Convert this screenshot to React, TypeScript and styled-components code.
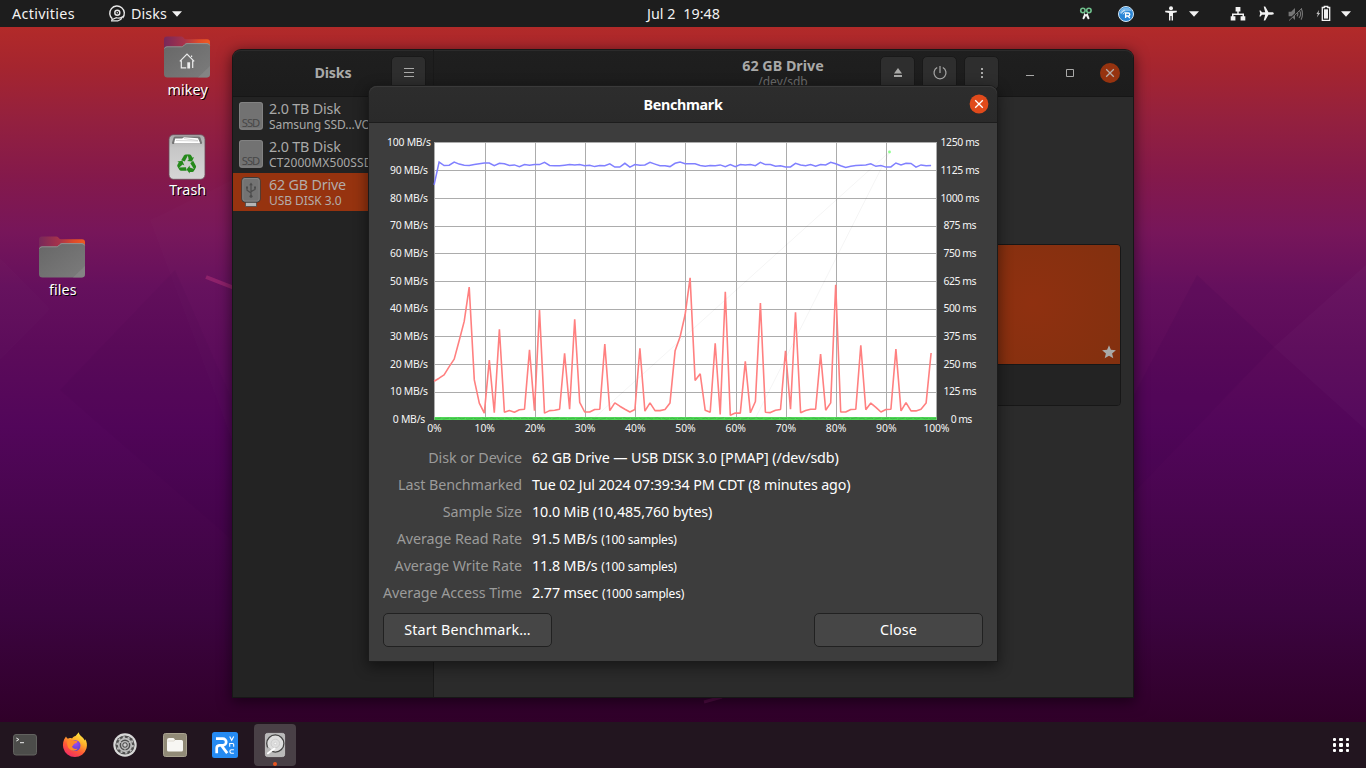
import React from "react";
import styled, { createGlobalStyle, css } from "styled-components";

/* ---------- global ---------- */

const GlobalStyle = createGlobalStyle`
  * { box-sizing: border-box; }
  body {
    margin: 0;
    overflow: hidden;
    font-family: "Noto Sans", "Open Sans", sans-serif;
    font-size: 14.3px;
    line-height: 18px;
  }
  svg { display: block; flex: none; overflow: visible; }
`;

const Screen = styled.div`
  display: flex;
  flex-direction: column;
  width: 1366px;
  height: 768px;
  overflow: hidden;
`;

/* ---------- top bar ---------- */

const TopBar = styled.header`
  display: grid;
  grid-template-columns: 1fr auto 1fr;
  align-items: center;
  height: 27px;
  padding: 0 11px 0 12px;
  background: #1d1d1d;
  color: #f2f2f2;
`;

const TopLeft = styled.div`
  display: flex;
  align-items: center;
`;

const Activities = styled.span`
  width: 97px;
  letter-spacing: 0.34px;
`;

const AppMenu = styled.div`
  display: flex;
  align-items: center;
  gap: 5px;
  letter-spacing: 0.11px;
`;

const Clock = styled.span`
  white-space: pre;
  letter-spacing: 0.06px;
`;

const Tray = styled.div`
  display: flex;
  align-items: center;
  justify-content: flex-end;
`;

const TrayItem = styled.span<{ $w: number; $before?: number }>`
  display: flex;
  justify-content: center;
  width: ${(p) => p.$w}px;
  margin-left: ${(p) => p.$before ?? 0}px;
`;

/* ---------- desktop ---------- */

const Desktop = styled.main`
  position: relative;
  flex: 1;
  overflow: hidden;
  background: linear-gradient(
    180deg,
    #b22a29 0px,
    #a5252f 40px,
    #93203f 95px,
    #84194b 150px,
    #77165a 205px,
    #65105d 260px,
    #5c0b5a 320px,
    #52065a 400px,
    #47054d 490px,
    #3b043f 590px,
    #300029 695px
  );
`;

const Facets = styled.svg`
  position: absolute;
  inset: 0;
`;

const DesktopItem = styled.div<{ $x: number; $y: number }>`
  position: absolute;
  left: ${(p) => p.$x}px;
  top: ${(p) => p.$y}px;
  display: flex;
  flex-direction: column;
  align-items: center;
  width: 80px;
  color: #fff;
  text-shadow: 1px 1px 0 #000;
`;

const ItemLabel = styled.span<{ $gap: number }>`
  margin-top: ${(p) => p.$gap}px;
  padding-left: 1.5px;
  letter-spacing: 0.1px;
`;

/* ---------- disks window ---------- */

const DisksWindow = styled.section`
  position: absolute;
  left: 233px;
  top: 23px;
  display: flex;
  width: 900px;
  height: 647px;
  border-radius: 8px 8px 0 0;
  box-shadow: 0 0 0 1px #171717, 0 3px 14px 2px rgba(0, 0, 0, 0.5);
  color: #a9a9a8;
`;

const headerLook = css`
  display: flex;
  height: 47px;
  background: linear-gradient(#1f1f1f, #1c1c1c);
  border-bottom: 1px solid #161616;
  box-shadow: inset 0 1px #2b2b2b;
`;

const Sidebar = styled.aside`
  display: flex;
  flex-direction: column;
  width: 201px;
  background: #232323;
  border-right: 1px solid #191919;
  border-radius: 8px 0 0 0;
`;

const SideHeader = styled.div`
  ${headerLook}
  align-items: center;
  border-radius: 8px 0 0 0;
  padding-right: 7px;
`;

const SideTitle = styled.h2`
  flex: 1;
  margin: 0;
  padding-left: 42px;
  font-size: 14.3px;
  font-weight: 700;
  text-align: center;
  letter-spacing: -0.19px;
`;

const HeaderButton = styled.button`
  display: flex;
  align-items: center;
  justify-content: center;
  width: 35px;
  height: 34px;
  padding: 0;
  border: 1px solid #191919;
  border-radius: 5px;
  background: #2e2e2e;
  color: #a9a9a8;
`;

const DriveRow = styled.div<{ $active?: boolean }>`
  display: flex;
  align-items: center;
  gap: 6px;
  height: 38px;
  padding-left: 6px;
  background: ${(p) => (p.$active ? "#96330f" : "transparent")};
  color: ${(p) => (p.$active ? "#b3aca9" : "#a9a9a8")};
`;

const DriveText = styled.div`
  display: flex;
  flex-direction: column;
  white-space: nowrap;
`;

const DriveName = styled.span`
  line-height: 16px;
  letter-spacing: -0.17px;
`;

const DriveModel = styled.span<{ $track: number }>`
  font-size: 12px;
  line-height: 15px;
  letter-spacing: ${(p) => p.$track}px;
`;

const MainPane = styled.div`
  display: flex;
  flex-direction: column;
  flex: 1;
  background: #2b2b2b;
  border-radius: 0 8px 0 0;
`;

const MainHeader = styled.div`
  ${headerLook}
  position: relative;
  align-items: center;
  justify-content: flex-end;
  gap: 7px;
  border-radius: 0 8px 0 0;
`;

const MainTitle = styled.div`
  position: absolute;
  inset: 7px 1px 0 0;
  display: flex;
  flex-direction: column;
  align-items: center;
  font-weight: 700;
`;

const MainSubtitle = styled.span`
  font-size: 12px;
  font-weight: 400;
  line-height: 13px;
  color: #6d6d6d;
`;

const WindowControls = styled.div`
  display: grid;
  grid-template-columns: 40px 34px 20px;
  align-items: center;
  margin: 0 13px 0 20px;
`;

const VolumeArea = styled.div`
  display: flex;
  flex-direction: column;
  height: 162px;
  margin: 147px 12px 0;
  border: 1px solid #171717;
  border-radius: 4px;
  overflow: hidden;
`;

const Volume = styled.div`
  display: flex;
  align-items: flex-end;
  justify-content: flex-end;
  height: 120px;
  padding: 0 4px 5px;
  border-bottom: 1px solid #171717;
  background: radial-gradient(circle at 585px 58px, #8f3010 0, #83300f 100px, #7c2e14 160px);
`;

const VolumeToolbar = styled.div`
  flex: 1;
  background: #232323;
`;

/* ---------- benchmark dialog ---------- */

const Dialog = styled.section`
  position: absolute;
  left: 369px;
  top: 59px;
  display: flex;
  flex-direction: column;
  width: 628px;
  height: 575px;
  border-radius: 8px 8px 0 0;
  background: #3d3d3d;
  box-shadow: 0 0 0 1px #1b1b1b, 0 4px 14px 2px rgba(0, 0, 0, 0.45);
  color: #fff;
`;

const DialogHeader = styled.div`
  display: grid;
  grid-template-columns: 28px 1fr 28px;
  align-items: center;
  height: 37px;
  border-bottom: 1px solid #1d1d1d;
  border-radius: 8px 8px 0 0;
  background: linear-gradient(#2d2d2d, #2a2a2a);
  box-shadow: inset 0 1px #3a3a3a;
`;

const DialogTitle = styled.h1`
  grid-column: 2;
  margin: 0;
  padding-top: 2px;
  font-size: 14.3px;
  font-weight: 700;
  line-height: 18px;
  text-align: center;
  letter-spacing: -0.31px;
`;

const Facts = styled.dl`
  display: grid;
  grid-template-columns: 139px auto;
  grid-auto-rows: 27px;
  column-gap: 10px;
  align-items: center;
  margin: 0 14px;
`;

const FactName = styled.dt`
  white-space: nowrap;
  text-align: right;
  color: #9b9b9a;
  letter-spacing: -0.06px;
`;

const FactValue = styled.dd<{ $track?: number }>`
  margin: 0;
  letter-spacing: ${(p) => p.$track ?? -0.1}px;
`;

const Samples = styled.small`
  font-size: 12px;
  line-height: 1;
  letter-spacing: -0.16px;
`;

const DialogActions = styled.div`
  display: flex;
  justify-content: space-between;
  margin: 7px 14px 0;
`;

const ActionButton = styled.button<{ $track: number }>`
  width: 169px;
  height: 34px;
  padding: 0 0 1px;
  border: 1px solid #212121;
  border-radius: 5px;
  background: #464646;
  color: #fff;
  font: inherit;
  letter-spacing: ${(p) => p.$track}px;
`;

/* ---------- dock ---------- */

const Dock = styled.footer`
  display: flex;
  align-items: center;
  height: 46px;
  padding-right: 11px;
  background: #22151f;
`;

const DockSlot = styled.div`
  display: flex;
  justify-content: center;
  width: 50px;
`;

const DockTile = styled.div<{ $active?: boolean }>`
  position: relative;
  display: flex;
  align-items: center;
  justify-content: center;
  width: 42px;
  height: 42px;
  border-radius: 4px;
  background: ${(p) => (p.$active ? "#494046" : "transparent")};
`;

const RunningDot = styled.span`
  position: absolute;
  left: 19px;
  bottom: 0;
  width: 4px;
  height: 4px;
  border-radius: 2px;
  background: #e95420;
`;

const AppsButton = styled.div`
  display: grid;
  grid-template-columns: repeat(3, 4px);
  gap: 2.4px;
  margin-left: auto;
  margin-right: 5px;
  width: 17px;
`;

const AppsDot = styled.i`
  width: 3.4px;
  height: 3.4px;
  border-radius: 1px;
  background: #fff;
`;

/* ---------- icons ---------- */

const Caret = () => (
  <svg width="10" height="6" viewBox="0 0 10 6">
    <path d="M0 .3h10L5 5.700z" fill="#f2f2f2" />
  </svg>
);

const DisksSymbol = () => (
  <svg width="17" height="17" viewBox="0 0 17 17" fill="none" stroke="#e8e8e8" strokeWidth="1.4">
    <path d="M3.400 13.900A7.300 7.300 0 1 1 13.600 13" />
    <circle cx="8.300" cy="7.800" r="2.500" />
    <circle cx="8.300" cy="7.800" r=".7" fill="#e8e8e8" stroke="none" />
    <path d="M2.800 14.800l4.600-2.100c2.200.8 3.800.6 5.600-.7l-1 2.300-3.200 1.600H2.600z" strokeWidth="1.100" />
  </svg>
);

const ScissorsIcon = () => (
  <svg width="14" height="14" viewBox="0 0 14 14" fill="none">
    <circle cx="3.900" cy="3.500" r="2.200" stroke="#6fbf8c" strokeWidth="1.600" />
    <circle cx="9.900" cy="3.500" r="2.200" stroke="#6fbf8c" strokeWidth="1.600" />
    <path d="M5.200 6l1.700 1.400L8.600 6l.6 2 1.400 3.600-1.600 1-2-3.900-2.100 3.900-1.500-1L4.800 8z" fill="#f3f3f3" />
  </svg>
);

const VncTrayIcon = () => (
  <svg width="16" height="16" viewBox="0 0 16 16" fill="none">
    <circle cx="8" cy="8" r="7.500" fill="#2b86d6" stroke="#d5e7f5" />
    <path d="M2 6a6.400 6.400 0 0 1 12-.5C10 4.500 6 5 2 8z" fill="#7ab9ec" />
    <path d="M7.600 12V7h2.700a1.500 1.500 0 0 1 0 3H7.800m2.200 0l1.900 2" stroke="#fff" strokeWidth="1.300" />
    <path d="M3.600 7.500c.4-1.700 1.500-2.800 3.200-3.300M5.200 8.300c.3-1 .8-1.500 1.700-1.900" stroke="#fff" strokeWidth=".8" />
  </svg>
);

const PersonIcon = () => (
  <svg width="12" height="15" viewBox="0 0 12 15" fill="#f2f2f2">
    <circle cx="6" cy="2.300" r="2" />
    <path d="M.2 4.800h11.600v1.400L8 6.900v7.600H6.600V10H5.400v4.500H4V6.900L.2 6.200z" />
  </svg>
);

const NetworkIcon = () => (
  <svg width="16" height="14" viewBox="0 0 16 14" fill="#f2f2f2">
    <path d="M5.600 0h4.800v4.600H8.700v2H14v2.700h1.300v4.200h-4.700V9.300h1.900V8H3.500v1.300h1.900v4.200H.7V9.300H2V6.600h5.300v-2H5.600z" />
  </svg>
);

const PlaneIcon = () => (
  <svg width="15" height="15" viewBox="0 0 15 15" fill="#f2f2f2">
    <path d="M14.800 7.500c0-.8-.8-1.200-2-1.200H9.500L6.200.4H4.700l1.500 5.900H3L1.600 4.500H.4l.8 3-.8 3h1.200L3 8.700h3.200L4.700 14.600h1.500l3.300-5.900h3.300c1.200 0 2-.4 2-1.200z" />
  </svg>
);

const MutedIcon = () => (
  <svg width="15" height="14" viewBox="0 0 15 14" fill="none" stroke="#757575">
    <path d="M.6 4.800h2.600L7 1v12L3.200 9.200H.6z" fill="#757575" stroke="none" />
    <path d="M9 4.700c1 1.300 1 3.300 0 4.600M11 3c1.900 2.300 1.900 5.700 0 8M13 1.400c2 3 2 8.200 0 11.200" strokeWidth="1.100" />
    <path d="M.7 13L13.600.6" stroke="#1d1d1d" strokeWidth="1.300" />
    <path d="M1 13.600L14 1.200" />
  </svg>
);

const BatteryIcon = () => (
  <svg width="15" height="15" viewBox="0 0 15 15" fill="none">
    <path d="M3 4L.4 8h1.500L.8 11.500 4.200 7H2.600z" fill="#bdbdbd" />
    <path d="M8.300 1.500v-1h3.400v1h2v12.800H6.300V1.500z" stroke="#f2f2f2" strokeWidth="1.300" />
    <path d="M8 3.300h4v9.300H8z" fill="#f2f2f2" />
  </svg>
);

const FolderIcon = ({ home }: { home?: boolean }) => (
  <svg width="46" height="42" viewBox="0 0 46 42">
    <defs>
      <linearGradient id="folderBack" x1="0" x2="1">
        <stop offset="0" stopColor="#77285a" />
        <stop offset=".45" stopColor="#a8334a" />
        <stop offset=".75" stopColor="#dd4a2a" />
        <stop offset="1" stopColor="#ee5a22" />
      </linearGradient>
      <linearGradient id="folderFront" x1="0" y1="0" x2="1" y2="1">
        <stop offset="0" stopColor="#676767" />
        <stop offset="1" stopColor="#7c7c7c" />
      </linearGradient>
    </defs>
    <path d="M0 12V3.500Q0 .5 3 .5h14.500q1.500 0 2.300 1.500.8 1.300 2.200 1.300H43q3 0 3 3V15H0z" fill="url(#folderBack)" />
    <path d="M0 13.500q0-3 3-3h14.500q1.200 0 2-.9l1.300-1.300q.9-1 2.200-1h20q3 0 3 3V38q0 3.600-3.500 3.600h-39Q0 41.600 0 38z" fill="url(#folderFront)" />
    <path d="M.5 12.600q.5-1.800 2.500-1.800h14.500q1.200 0 2-.9l1.300-1.300q.9-1 2.200-1h20q2 0 2.600 1.800" fill="none" stroke="#9a9a9a" strokeWidth=".8" />
    <path d="M46 30v8q0 3.600-3.500 3.600H34z" fill="#8a8a8a" opacity=".6" />
    {home && (
      <path
        d="M15.800 25.300L23 18l7.200 7.300M17.300 24.500v7.400h4.900M28.700 24.500v7.400M27.600 21v-1.600"
        fill="none"
        stroke="#ececec"
        strokeWidth="1.200"
      />
    )}
    {home && <path d="M23.300 26.300h2.800v6.200h-2.800z" fill="#ececec" />}
  </svg>
);

const TrashIcon = () => (
  <svg width="38" height="46" viewBox="0 0 38 46">
    <defs>
      <linearGradient id="bin" x1="0" y1="0" x2="0" y2="1">
        <stop offset="0" stopColor="#aaa" />
        <stop offset=".3" stopColor="#c6c6c6" />
        <stop offset="1" stopColor="#d6d6d6" />
      </linearGradient>
    </defs>
    <rect x="1" y=".7" width="36" height="44.600" rx="4.500" fill="url(#bin)" stroke="#6b4a58" strokeWidth=".8" />
    <path d="M4 8.500L5.500 3.800q.5-1.300 2-1.300h23q1.500 0 2 1.300L34 8.500q.3 1.500-1 1.500H5q-1.300 0-1-1.500z" fill="#747474" />
    <path d="M6 9.600l1.200-5.100h7L16 3.300l14 1 2.300 5.300z" fill="#fff" />
    <path d="M8 6.500l22 .5M16 4.500l14 2" stroke="#bbb" strokeWidth=".6" />
    <g transform="translate(19 30)" fill="#25891b">
      {[0, 120, 240].map((a) => (
        <g key={a} transform={`rotate(${a})`}>
          <path d="M-5.800-3.700L-3-8.500q.7-1 1.900-1h2.500l-3.700 7z" />
          <path d="M.7-9.500h2q1 0 1.500.9L5.500-6.300l1.500-.8-2 4.700-5-.7 1.700-1z" />
        </g>
      ))}
    </g>
  </svg>
);

const SsdIcon = () => (
  <svg width="24" height="28" viewBox="0 0 24 28">
    <rect width="24" height="28" rx="3" fill="#727272" />
    <rect x=".5" y=".5" width="23" height="26.500" rx="2.500" fill="none" stroke="#878787" strokeWidth=".8" />
    <text x="12" y="25" textAnchor="middle" textLength="18.500" fontSize="11.200" fill="#474747" fontFamily="Noto Sans">
      SSD
    </text>
  </svg>
);

const UsbIcon = () => (
  <svg width="24" height="30" viewBox="0 0 24 30">
    <path d="M6.500 25h11v4.500h-11z" fill="#b5b5b5" stroke="#4a4a4a" strokeWidth=".8" />
    <rect x="2.800" y=".5" width="18.400" height="24.600" rx="3" fill="#737373" stroke="#3c3a38" />
    <rect x="3.800" y="1.500" width="16.400" height="22.600" rx="2.200" fill="none" stroke="#8c8c8c" strokeWidth=".8" />
    <g stroke="#4c4c4c" strokeWidth="1.200" fill="none">
      <path d="M12 7.500v11M8 10.500v2.700L12 16M16 10.500v2L12 14.600" />
    </g>
    <path d="M12 5.500l1.800 2.800h-3.600zM7 9.500h2v2H7zM15 9.500h2v2h-2z" fill="#4c4c4c" />
    <circle cx="12" cy="19.300" r="1.500" fill="#4c4c4c" />
  </svg>
);

const MenuLines = () => (
  <svg width="10" height="10" viewBox="0 0 10 10" fill="currentColor">
    <path d="M0 0h10v1H0zM0 4h10v1H0zM0 8h10v1H0z" />
  </svg>
);

const EjectIcon = () => (
  <svg width="8" height="10" viewBox="0 0 8 10" fill="currentColor">
    <path d="M4 0l4 5.600H0zM0 7h8v2H0z" />
  </svg>
);

const PowerIcon = () => (
  <svg width="14" height="15" viewBox="0 0 14 15" fill="none" stroke="currentColor" strokeWidth="1.200">
    <path d="M4.200 1.500a6 6 0 1 0 5.600 0M7 0v7" />
  </svg>
);

const KebabIcon = () => (
  <svg width="2" height="10" viewBox="0 0 2 10" fill="currentColor">
    <path d="M0 0h2v2H0zM0 4h2v2H0zM0 8h2v2H0z" />
  </svg>
);

const MinimizeIcon = () => (
  <svg width="8" height="8" viewBox="0 0 8 8">
    <path d="M0 6h8v1H0z" fill="#a9a9a8" />
  </svg>
);

const MaximizeIcon = () => (
  <svg width="8" height="8" viewBox="0 0 8 8" fill="none" stroke="#a9a9a8">
    <path d="M.5.5h7v7h-7z" />
  </svg>
);

const CloseIcon = ({ dim }: { dim?: boolean }) => (
  <svg width="20" height="20" viewBox="0 0 20 20">
    <circle cx="10" cy="10" r={dim ? 10 : 9.4} fill={dim ? "#96330f" : "#e04a1b"} />
    <path d="M6.200 6.200l7.600 7.600M13.800 6.200l-7.600 7.600" stroke={dim ? "#b5aeab" : "#fff"} strokeWidth="1.300" />
  </svg>
);

const StarIcon = () => (
  <svg width="14" height="14" viewBox="0 0 14 14" fill="#a9a9a8">
    <path d="M7 .2l1.900 4.600 5 .4-3.800 3.200 1.200 4.900L7 10.700l-4.300 2.600 1.200-4.900L.1 5.200l5-.4z" />
  </svg>
);

const TerminalIcon = () => (
  <svg width="24" height="22" viewBox="0 0 24 22">
    <rect x=".5" y=".5" width="23" height="20.500" rx="2.500" fill="#4c4c4a" stroke="#62625f" />
    <path d="M3.300 4l2.600 1.500-2.600 1.500M7 8.700h4" fill="none" stroke="#eee" />
  </svg>
);

const FirefoxIcon = () => (
  <svg width="26" height="26" viewBox="0 0 26 26">
    <defs>
      <linearGradient id="fox" x1=".8" y1="0" x2=".25" y2="1">
        <stop offset="0" stopColor="#fff14a" />
        <stop offset=".35" stopColor="#ffb12a" />
        <stop offset=".65" stopColor="#ff5a36" />
        <stop offset="1" stopColor="#f0266a" />
      </linearGradient>
      <radialGradient id="globe" cx=".55" cy=".3" r=".7">
        <stop offset="0" stopColor="#a24cf0" />
        <stop offset="1" stopColor="#5b3fd0" />
      </radialGradient>
    </defs>
    <path
      d="M4 4.500c.3 1 1 1.700 1.900 2.200C7 5.900 8.800 5.900 10 6.500c1-1.500 2.300-2.300 3.500-2.500L16.800.3c.1 1.800 1.200 3 2.700 4.300 1.700 1.500 2.700 2.600 3.200 4l.6-1.300c1.600 2.700 2.100 5.800 1.200 9A12 12 0 0 1 1.300 16C.5 12.500 1 8 4 4.500z"
      fill="url(#fox)"
    />
    <circle cx="13" cy="13.500" r="5.500" fill="url(#globe)" />
    <path d="M5.500 8c3-1.500 5 .2 6.800.5 2 .2 3 .3 3 1.200 0 1-2.300 1.600-3.300 2.400-.8.700-.3 2-2 2.100.6 2.300 3.200 3.300 5.700 2.300-1.500 2.500-5.500 3-8 .8C5.200 15.300 4.500 11 5.500 8z" fill="#ff8a2a" />
  </svg>
);

const SettingsIcon = () => (
  <svg width="24" height="24" viewBox="0 0 24 24">
    <circle cx="12" cy="12" r="11.700" fill="#d8d8d8" />
    <circle cx="12" cy="12" r="9.600" fill="#4e4e4e" />
    <circle cx="12" cy="12" r="6.300" fill="none" stroke="#bcbcbc" strokeWidth="1.800" />
    <circle cx="12" cy="12" r="7.900" fill="none" stroke="#bcbcbc" strokeWidth="1.700" strokeDasharray="2.200 2.760" />
    <circle cx="12" cy="12" r="3.300" fill="none" stroke="#bcbcbc" strokeWidth="1.200" />
    <circle cx="12" cy="12" r="1.700" fill="#cfcfcf" />
    <path d="M12 15v3M14.600 10.500l2.600-1.500M9.400 10.500L6.800 9" stroke="#bcbcbc" />
  </svg>
);

const FilesIcon = () => (
  <svg width="24" height="24" viewBox="0 0 24 24">
    <rect x=".5" y=".5" width="23" height="23" rx="2" fill="#918a77" stroke="#a9a290" />
    <path d="M4 7q0-2 2-2h4q1 0 1.500 1l.5 1h6.500q1.500 0 1.500 1.500V17q0 1.500-1.500 1.500h-13Q4 18.500 4 17z" fill="#f7f6f3" />
    <path d="M12 7l-1 1H4.500" fill="none" stroke="#d4cfc2" strokeWidth=".7" />
  </svg>
);

const RealVncIcon = () => (
  <svg width="26" height="26" viewBox="0 0 26 26" fill="none" stroke="#fff">
    <rect width="26" height="26" rx="2.500" fill="#258af2" stroke="none" />
    <path d="M4 6.600h6.800a3.300 3.300 0 0 1 0 6.800H9.300l5.900 7.700M8.300 13.400H7.200a2.800 2.800 0 0 0-2.500 2.800v5" strokeWidth="2.700" />
    <path d="M17.700 4.500l2 3.800 2-3.800M17.700 14.800v-3.300h3q1 0 1 1v2.300M21.900 17.800h-2.400q-1.600 0-1.600 1.700t1.600 1.700h2.400" strokeWidth="1.100" />
  </svg>
);

const DisksAppIcon = () => (
  <svg width="20" height="24" viewBox="0 0 20 24">
    <rect x=".4" y=".4" width="19.200" height="23.200" rx="2" fill="#b9b9b9" stroke="#cfcfcf" strokeWidth=".8" />
    <circle cx="10.300" cy="10.500" r="8.600" fill="#dedede" stroke="#444" strokeWidth="1.300" />
    <circle cx="10.300" cy="10.500" r="4.300" fill="none" stroke="#cbcbcb" />
    <circle cx="10.300" cy="10.500" r="1.300" fill="#f7f7f7" stroke="#bbb" strokeWidth=".5" />
    <path d="M2.500 14.200q3 .3 4.500 3.700l-3.400 3.300H2.200z" fill="#b9b9b9" />
    <path d="M9.500 15.500L3 20.300" stroke="#fff" strokeWidth="2" strokeLinecap="round" />
  </svg>
);

/* ---------- chart ---------- */

const readRates = [
  84.6, 92.8, 91.6, 91.7, 92.8, 92.1, 91.7, 91.6, 91.9, 92.2, 92.5, 92.5, 91.5, 92.4, 92.2, 91.6, 91.8, 91.2, 91.9,
  91.7, 91.9, 91.9, 92.7, 91.6, 91.5, 91.5, 91.7, 91.9, 91.8, 91.9, 91.5, 91.7, 91.2, 91.6, 91.5, 92.2, 91, 91, 92.4,
  91, 91.9, 91.7, 91.8, 92.7, 92.1, 91.5, 91.5, 91.2, 92.4, 92.8, 92.2, 92.2, 92.2, 91.6, 91.3, 91.6, 91.5, 91.8, 91.2,
  91.9, 91.2, 91.9, 91.8, 91.9, 91.5, 92.7, 91.9, 91.9, 91.3, 91.5, 91.1, 91.1, 92.4, 91.8, 91.5, 91.9, 91.3, 91.9,
  91.8, 92.7, 92.2, 91.5, 90.9, 91.3, 91.6, 91.7, 91.8, 92.2, 91.3, 91.6, 91, 91.1, 92.5, 91.8, 92.4, 92.3, 91, 91.8,
  91.5, 91.6,
];

const writeRates = [
  13.7, 14.8, 16, 19, 21.7, 28.4, 35.3, 47.7, 14.2, 5.8, 2.2, 21.3, 2.4, 32.5, 2.5, 3.1, 2.5, 3.4, 3.6, 25, 3.1, 39.4,
  2.2, 3.1, 3.2, 3.6, 23.8, 3.6, 36.1, 6.1, 2.6, 2.6, 3.5, 3.6, 27.1, 3.1, 5.9, 4.7, 3.6, 2.6, 3.5, 25.6, 2.9, 5.9,
  3.1, 3.1, 3.5, 5.9, 24.7, 29.8, 37.7, 51, 14, 16.4, 3.2, 2.5, 27.4, 1.7, 46, 1.4, 2.2, 2.2, 20.9, 2.3, 6.4, 41.9,
  2.5, 2.4, 3.2, 3.5, 24.7, 3.6, 38.6, 2.3, 3.1, 3.6, 3.6, 23.5, 3.2, 5.9, 48.5, 2.6, 2.6, 3.5, 3.6, 26.7, 3.4, 5.8,
  4.3, 2.6, 3.5, 3.6, 25.3, 3, 6, 3, 3, 3.6, 5.8, 23.9,
];

const PLOT = { x: 65.5, y: 19.5, w: 502, h: 277 };
const px = (pct: number) => PLOT.x + (pct * PLOT.w) / 100;
const py = (rate: number) => PLOT.y + PLOT.h * (1 - rate / 100);
const toPoints = (rates: number[]) =>
  rates.map((r, i) => `${(px(i) - 0.4).toFixed(1)},${(py(r) - 0.3).toFixed(1)}`).join(" ");

const accessTimes = Array.from({ length: 168 }, (_, i) => `${px(i * 0.6)},${py(0.15 + ((i * 37) % 11) * 0.04)}`).join(" ");

const ticks = Array.from({ length: 11 }, (_, i) => i * 10);

const ChartSvg = styled.svg`
  font-family: "Noto Sans", "Open Sans", sans-serif;
  font-size: 10.4px;
`;

const BenchmarkChart = () => (
  <ChartSvg width="628" height="321" viewBox="0 0 628 321" fill="#f5f5f5">
    <rect x="65" y="19" width="503" height="278" fill="#fff" />
    <g fill="#000" opacity=".32">
      {ticks.map((t) => (
        <rect key={`v${t}`} x={Math.round(px(t) - 0.1)} y="19" width="1" height="278" />
      ))}
      {ticks.map((t) => (
        <rect key={`h${t}`} x="65" y={Math.round(py(t) - 0.1)} width="503" height="1" />
      ))}
    </g>
    <path d="M224 296L520.500 29L386 296" fill="none" stroke="#000" strokeOpacity=".06" strokeWidth=".8" />
    <polyline points={toPoints(readRates)} fill="none" stroke="#8080ff" strokeWidth="1.500" />
    <polyline points={toPoints(writeRates)} fill="none" stroke="#ff8080" strokeWidth="1.600" strokeLinejoin="bevel" />
    <path d="M65.500 295.500h502" stroke="#50d957" strokeWidth="3" />
    <polyline points={accessTimes} fill="none" stroke="#2f8a35" strokeWidth=".6" strokeDasharray="7 1" opacity=".75" />
    <circle cx="520.500" cy="29" r="1.400" fill="#8dff8d" />
    {ticks.map((t) => (
      <React.Fragment key={t}>
        <text x="40" y={py(t) + 3.6} textAnchor="middle" textLength={t === 100 ? 44 : t === 0 ? 32.5 : 38}>
          {t} MB/s
        </text>
        <text x={t === 0 ? 592.5 : 591} y={py(t) + 3.6} textAnchor="middle" textLength={t >= 80 ? 39 : t === 0 ? 21.5 : 33}>
          {t * 12.5} ms
        </text>
        <text x={px(t)} y="308.800" textAnchor="middle" textLength={t === 100 ? 26 : t === 0 ? 14.5 : 20.5}>
          {t}%
        </text>
      </React.Fragment>
    ))}
  </ChartSvg>
);

/* ---------- page ---------- */

export default function App() {
  return (
    <Screen>
      <GlobalStyle />
      <TopBar>
        <TopLeft>
          <Activities>Activities</Activities>
          <AppMenu>
            <DisksSymbol />
            <span>Disks</span>
            <Caret />
          </AppMenu>
        </TopLeft>
        <Clock>{"Jul 2  19:48"}</Clock>
        <Tray>
          <TrayItem $w={40}><ScissorsIcon /></TrayItem>
          <TrayItem $w={40}><VncTrayIcon /></TrayItem>
          <TrayItem $w={24} $before={13}><PersonIcon /></TrayItem>
          <TrayItem $w={22}><Caret /></TrayItem>
          <TrayItem $w={28} $before={19}><NetworkIcon /></TrayItem>
          <TrayItem $w={29}><PlaneIcon /></TrayItem>
          <TrayItem $w={28}><MutedIcon /></TrayItem>
          <TrayItem $w={28}><BatteryIcon /></TrayItem>
          <TrayItem $w={18}><Caret /></TrayItem>
        </Tray>
      </TopBar>

      <Desktop>
        <Facets width="1366" height="695" viewBox="0 27 1366 695">
          <path d="M1197 275L1274 347L1134 492V395z" fill="#3a0050" opacity=".13" />
          <path d="M1366 265V430L1274 347z" fill="#fff" opacity=".018" />
          <path d="M0 258L50 309L0 360z" fill="#fff" opacity=".012" />
          <path d="M150 220L232 180V440L195 340z" fill="#fff" opacity=".012" />
          <path d="M175 270L232 400V540L60 390z" fill="#2b0048" opacity=".06" />
          <path d="M206 277L233 287.500" stroke="#a32a72" strokeWidth="4" opacity=".65" />
          <path d="M704 702L722 697" stroke="#8a2070" strokeWidth="3" opacity=".35" />
        </Facets>

        <DesktopItem $x={147} $y={9}>
          <FolderIcon home />
          <ItemLabel $gap={3}>mikey</ItemLabel>
        </DesktopItem>
        <DesktopItem $x={147} $y={107}>
          <TrashIcon />
          <ItemLabel $gap={1}>Trash</ItemLabel>
        </DesktopItem>
        <DesktopItem $x={22} $y={209}>
          <FolderIcon />
          <ItemLabel $gap={3}>files</ItemLabel>
        </DesktopItem>

        <DisksWindow>
          <Sidebar>
            <SideHeader>
              <SideTitle>Disks</SideTitle>
              <HeaderButton><MenuLines /></HeaderButton>
            </SideHeader>
            <DriveRow>
              <SsdIcon />
              <DriveText>
                <DriveName>2.0 TB Disk</DriveName>
                <DriveModel $track={-0.08}>Samsung SSD…VO 2TB</DriveModel>
              </DriveText>
            </DriveRow>
            <DriveRow>
              <SsdIcon />
              <DriveText>
                <DriveName>2.0 TB Disk</DriveName>
                <DriveModel $track={0.1}>CT2000MX500SSD1</DriveModel>
              </DriveText>
            </DriveRow>
            <DriveRow $active>
              <UsbIcon />
              <DriveText>
                <DriveName>62 GB Drive</DriveName>
                <DriveModel $track={-0.06}>USB DISK 3.0</DriveModel>
              </DriveText>
            </DriveRow>
          </Sidebar>
          <MainPane>
            <MainHeader>
              <MainTitle>
                62 GB Drive
                <MainSubtitle>/dev/sdb</MainSubtitle>
              </MainTitle>
              <HeaderButton><EjectIcon /></HeaderButton>
              <HeaderButton><PowerIcon /></HeaderButton>
              <HeaderButton><KebabIcon /></HeaderButton>
              <WindowControls>
                <MinimizeIcon />
                <MaximizeIcon />
                <CloseIcon dim />
              </WindowControls>
            </MainHeader>
            <VolumeArea>
              <Volume><StarIcon /></Volume>
              <VolumeToolbar />
            </VolumeArea>
          </MainPane>
        </DisksWindow>

        <Dialog>
          <DialogHeader>
            <DialogTitle>Benchmark</DialogTitle>
            <CloseIcon />
          </DialogHeader>
          <BenchmarkChart />
          <Facts>
            <FactName>Disk or Device</FactName>
            <FactValue $track={-0.11}>62 GB Drive — USB DISK 3.0 [PMAP] (/dev/sdb)</FactValue>
            <FactName>Last Benchmarked</FactName>
            <FactValue $track={-0.15}>Tue 02 Jul 2024 07:39:34 PM CDT (8 minutes ago)</FactValue>
            <FactName>Sample Size</FactName>
            <FactValue>10.0 MiB (10,485,760 bytes)</FactValue>
            <FactName>Average Read Rate</FactName>
            <FactValue>91.5 MB/s <Samples>(100 samples)</Samples></FactValue>
            <FactName>Average Write Rate</FactName>
            <FactValue>11.8 MB/s <Samples>(100 samples)</Samples></FactValue>
            <FactName>Average Access Time</FactName>
            <FactValue>2.77 msec <Samples>(1000 samples)</Samples></FactValue>
          </Facts>
          <DialogActions>
            <ActionButton $track={0.17}>Start Benchmark…</ActionButton>
            <ActionButton $track={0.14}>Close</ActionButton>
          </DialogActions>
        </Dialog>
      </Desktop>

      <Dock>
        <DockSlot><DockTile><TerminalIcon /></DockTile></DockSlot>
        <DockSlot><DockTile><FirefoxIcon /></DockTile></DockSlot>
        <DockSlot><DockTile><SettingsIcon /></DockTile></DockSlot>
        <DockSlot><DockTile><FilesIcon /></DockTile></DockSlot>
        <DockSlot><DockTile><RealVncIcon /></DockTile></DockSlot>
        <DockSlot>
          <DockTile $active>
            <DisksAppIcon />
            <RunningDot />
          </DockTile>
        </DockSlot>
        <AppsButton>
          {Array.from({ length: 9 }, (_, i) => (
            <AppsDot key={i} />
          ))}
        </AppsButton>
      </Dock>
    </Screen>
  );
}
